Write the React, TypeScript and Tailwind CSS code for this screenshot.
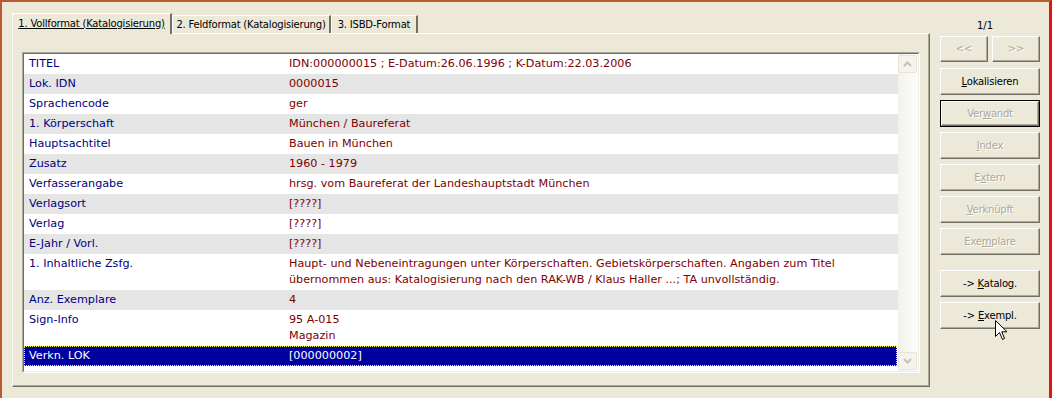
import React from "react";

type Row = { l: string; v: string[]; sel?: boolean };

const rows: Row[] = [
  { l: "TITEL", v: ["IDN:000000015 ; E-Datum:26.06.1996 ; K-Datum:22.03.2006"] },
  { l: "Lok. IDN", v: ["0000015"] },
  { l: "Sprachencode", v: ["ger"] },
  { l: "1. Körperschaft", v: ["München / Baureferat"] },
  { l: "Hauptsachtitel", v: ["Bauen in München"] },
  { l: "Zusatz", v: ["1960 - 1979"] },
  { l: "Verfasserangabe", v: ["hrsg. vom Baureferat der Landeshauptstadt München"] },
  { l: "Verlagsort", v: ["[????]"] },
  { l: "Verlag", v: ["[????]"] },
  { l: "E-Jahr / Vorl.", v: ["[????]"] },
  {
    l: "1. Inhaltliche Zsfg.",
    v: [
      "Haupt- und Nebeneintragungen unter Körperschaften. Gebietskörperschaften. Angaben zum Titel",
      "übernommen aus: Katalogisierung nach den RAK-WB / Klaus Haller ...; TA unvollständig.",
    ],
  },
  { l: "Anz. Exemplare", v: ["4"] },
  { l: "Sign-Info", v: ["95 A-015", "Magazin"] },
  { l: "Verkn. LOK", v: ["[000000002]"], sel: true },
];

function Btn({
  children,
  disabled,
  def,
  className = "",
}: {
  children: React.ReactNode;
  disabled?: boolean;
  def?: boolean;
  className?: string;
}) {
  return (
    <div className={`h-[27px] ${def ? "border border-black" : ""} ${className}`}>
      <div
        className={`h-full flex items-center justify-center border-t border-l border-t-white border-l-white border-r border-b border-r-[#716F64] border-b-[#716F64] shadow-[inset_-1px_-1px_0_#ACA899] text-[10px] tracking-[-0.2px] ${
          disabled ? "text-[#ACA899] [text-shadow:1px_1px_0_#ffffff]" : "text-black"
        }`}
      >
        <span className="whitespace-nowrap">{children}</span>
      </div>
    </div>
  );
}

function Arrow({ up }: { up?: boolean }) {
  return (
    <svg width="9" height="6" viewBox="0 0 9 6">
      {up ? (
        <path d="M1 5 L4.5 1.5 L8 5" fill="none" stroke="#C4C2B6" strokeWidth="2" />
      ) : (
        <path d="M1 1 L4.5 4.5 L8 1" fill="none" stroke="#C4C2B6" strokeWidth="2" />
      )}
    </svg>
  );
}

export default function App() {
  return (
    <div className="w-[1052px] h-[398px] bg-[#ECE9D8] relative overflow-hidden border-t-2 border-l-2 border-t-[#BA5A30] border-l-[#BA5A30] border-r-[3px] border-r-[#E81010] font-['DejaVu_Sans',sans-serif] text-[11.2px] leading-[16px]">
      <div className="flex pl-[10px] pt-[11px]">
        {/* Tab control */}
        <div className="w-[918px] h-[374px] flex flex-col">
          <div className="h-[20px] flex items-end text-[10px] tracking-[-0.2px]">
            <div className="relative z-10 w-[160px] h-[21px] -mb-[1px] bg-[#ECE9D8] border-t border-l border-white border-r-2 border-r-[#716F64] flex items-center justify-center pb-[1px]">
              <span className="underline whitespace-nowrap text-black">1. Vollformat (Katalogisierung)</span>
            </div>
            <div className="w-[159px] h-[18px] border-t border-l border-white border-r-2 border-r-[#716F64] flex items-center justify-center">
              <span className="whitespace-nowrap text-black">2. Feldformat (Katalogisierung)</span>
            </div>
            <div className="w-[87px] h-[18px] border-t border-l border-white border-r-2 border-r-[#716F64] flex items-center justify-center">
              <span className="whitespace-nowrap text-black">3. ISBD-Format</span>
            </div>
          </div>
          <div className="flex-1 border-t border-l border-white border-r border-b border-r-[#716F64] border-b-[#716F64] shadow-[inset_-1px_-1px_0_#ACA899] pl-[9px] pt-[18px]">
            {/* grid */}
            <div className="w-[898px] h-[321px] border-t border-l border-t-[#ACA899] border-l-[#ACA899] border-r border-b border-r-white border-b-white">
              <div className="h-full flex border-t border-l border-t-[#716F64] border-l-[#716F64] border-r border-b border-r-[#F1EFE2] border-b-[#F1EFE2] bg-white">
                <div className="w-[874px] flex flex-col">
                  {rows.map((r, i) =>
                    r.sel ? (
                      <div
                        key={i}
                        className="flex bg-[#0000A0] text-white border border-dotted border-[#FFFF40] py-[1px] mr-[1px]"
                      >
                        <div className="w-[259px] pl-[4px] whitespace-nowrap">{r.l}</div>
                        <div className="pl-[5px] whitespace-nowrap">{r.v.join(" ")}</div>
                      </div>
                    ) : (
                      <div key={i} className={`flex py-[2px] ${i % 2 === 1 ? "bg-[#E5E5E5]" : "bg-white"}`}>
                        <div className="w-[260px] pl-[5px] whitespace-nowrap text-[#000080]">{r.l}</div>
                        <div className="pl-[5px] text-[#800000]">
                          {r.v.map((t, j) => (
                            <div key={j} className="whitespace-nowrap">
                              {t}
                            </div>
                          ))}
                        </div>
                      </div>
                    )
                  )}
                </div>
                {/* scrollbar */}
                <div className="flex-1 flex flex-col justify-between py-[1px] pr-[1px] bg-gradient-to-r from-[#F3F1EC] to-[#FDFDFA]">
                  <div className="h-[18px] rounded-[2px] border border-[#E6E4DA] bg-[#F4F3EE] flex items-center justify-center">
                    <Arrow up />
                  </div>
                  <div className="h-[18px] rounded-[2px] border border-[#E6E4DA] bg-[#F4F3EE] flex items-center justify-center">
                    <Arrow />
                  </div>
                </div>
              </div>
            </div>
          </div>
        </div>

        {/* Right column */}
        <div className="w-[100px] ml-[10px] flex flex-col">
          <div className="h-[23px] text-center pr-[10px] pt-[5px] text-black text-[10px]">1/1</div>
          <div className="flex gap-[4px]">
            <Btn disabled className="w-[48px] !h-[26px]">&lt;&lt;</Btn>
            <Btn disabled className="w-[48px] !h-[26px]">&gt;&gt;</Btn>
          </div>
          <div className="flex flex-col gap-[5px] mt-[6px]">
            <Btn>
              <u>L</u>okalisieren
            </Btn>
            <Btn disabled def>
              Ver<u>w</u>andt
            </Btn>
            <Btn disabled>
              <u>I</u>ndex
            </Btn>
            <Btn disabled>
              E<u>x</u>tern
            </Btn>
            <Btn disabled>
              <u>V</u>erknüpft
            </Btn>
            <Btn disabled>
              Exe<u>m</u>plare
            </Btn>
          </div>
          <div className="flex flex-col gap-[5px] mt-[15px]">
            <Btn>
              -&gt; <u>K</u>atalog.
            </Btn>
            <Btn>
              -&gt; <u>E</u>xempl.
            </Btn>
          </div>
        </div>
      </div>

      {/* mouse cursor */}
      <svg className="absolute left-[993px] top-[318px]" width="13" height="21" viewBox="0 0 13 21">
        <path
          d="M0.5 0.5 L0.5 16.5 L4.5 12.5 L7.5 19.5 L9.5 18.5 L6.8 11.8 L12 11.8 Z"
          fill="#ffffff"
          stroke="#000000"
          strokeWidth="1"
          strokeLinejoin="miter"
        />
      </svg>
    </div>
  );
}
